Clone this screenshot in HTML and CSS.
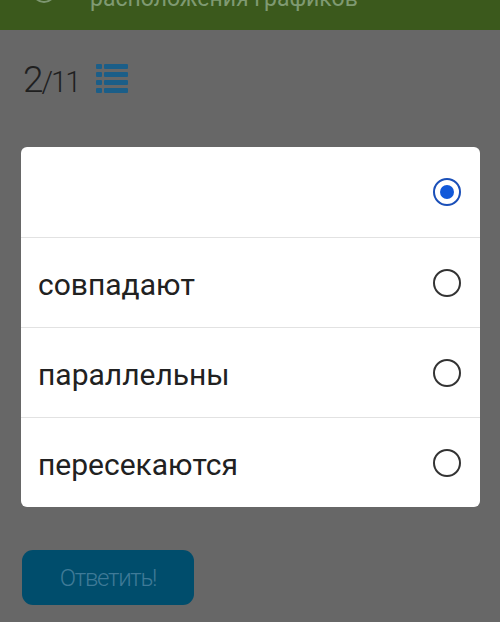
FILE: index.html
```html
<!DOCTYPE html>
<html lang="ru">
<head>
    <meta charset="UTF-8">
    <meta name="viewport" content="width=device-width, initial-scale=1.0">
    <title>Тест</title>
    <link rel="stylesheet" href="styles.css">
</head>
<body>
    <div class="topbar">
        <div class="back"></div>
        <div class="title">расположения графиков</div>
    </div>

    <div class="counter">
        <span class="cur">2</span><span class="total">/11</span>
        <svg class="list-icon" width="32" height="29" viewBox="0 0 32 29">
            <rect x="0" y="0" width="6" height="5" rx="1"/>
            <rect x="8" y="0" width="24" height="5" rx="1"/>
            <rect x="0" y="8" width="6" height="5" rx="1"/>
            <rect x="8" y="8" width="24" height="5" rx="1"/>
            <rect x="0" y="16" width="6" height="5" rx="1"/>
            <rect x="8" y="16" width="24" height="5" rx="1"/>
            <rect x="0" y="24" width="6" height="5" rx="1"/>
            <rect x="8" y="24" width="24" height="5" rx="1"/>
        </svg>
    </div>

    <div class="dialog">
        <div class="option">
            <span class="label"></span>
            <span class="radio checked"></span>
        </div>
        <div class="option">
            <span class="label">совпадают</span>
            <span class="radio"></span>
        </div>
        <div class="option">
            <span class="label">параллельны</span>
            <span class="radio"></span>
        </div>
        <div class="option">
            <span class="label">пересекаются</span>
            <span class="radio"></span>
        </div>
    </div>

    <button class="answer">Ответить!</button>
</body>
</html>
```

FILE: styles.css
```css
*{
    box-sizing: border-box;
}
body{
    margin: 0;
    background: #676767;
    font-family: Roboto, "Noto Sans", sans-serif;
}
.topbar{
    height: 30px;
    background: #3b591c;
    display: flex;
    overflow: hidden;
}
.back{
    width: 24px;
    height: 24px;
    margin: -21px 0 0 32px;
    border: 2px solid #7d9670;
    border-radius: 50%;
}
.title{
    margin: -13px 0 0 34px;
    font-size: 23px;
    line-height: 24px;
    color: #7f9a72;
}
.counter{
    display: flex;
    align-items: flex-end;
    margin: 34px 0 0 23px;
    height: 30px;
}
.cur{
    font-size: 37px;
    font-weight: 300;
    line-height: 28px;
    color: #1f1f1f;
    letter-spacing: -2px;
}
.total{
    font-size: 29px;
    font-weight: 300;
    line-height: 23px;
    color: #1f1f1f;
    letter-spacing: -2px;
}
.list-icon{
    fill: #1b5e88;
    margin: 0 0 0 17px;
    align-self: flex-start;
}
.dialog{
    margin: 53px 20px 0 21px;
    background: #fff;
    border-radius: 6px;
}
.option{
    height: 90px;
    display: flex;
    align-items: center;
    justify-content: space-between;
    padding: 0 19px 0 17px;
}
.option + .option{
    border-top: 1px solid #e2e2e2;
}
.label{
    font-size: 30px;
    color: #212121;
    padding-top: 4px;
}
.radio{
    width: 28px;
    height: 28px;
    border: 2.5px solid #333;
    border-radius: 50%;
    display: flex;
    align-items: center;
    justify-content: center;
}
.radio.checked{
    border-color: #1a4fb8;
}
.radio.checked::after{
    content: "";
    width: 14px;
    height: 14px;
    border-radius: 50%;
    background: #1158d9;
}
.answer{
    display: block;
    margin: 43px 0 0 22px;
    width: 172px;
    height: 55px;
    border: none;
    border-radius: 11px;
    background: #004d6c;
    color: #3f7a97;
    font-family: Roboto, sans-serif;
    font-weight: 300;
    font-size: 24px;
    letter-spacing: -1.3px;
}
```
